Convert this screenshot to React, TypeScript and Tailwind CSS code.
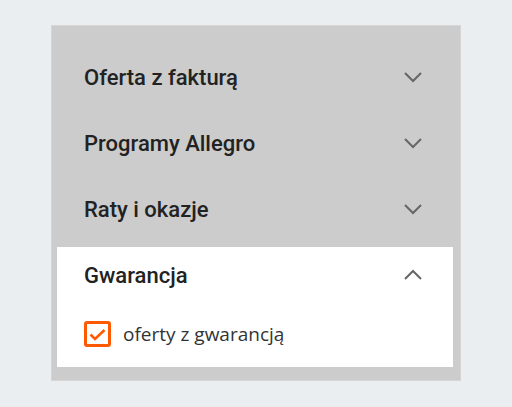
import React, { useState } from 'react';

function Chevron({ up }: { up?: boolean }) {
    return (
        <svg width="20" height="12" viewBox="0 0 20 12" className="shrink-0">
            <path
                d={up ? 'M2 10 L10 2 L18 10' : 'M2 2 L10 10 L18 2'}
                fill="none"
                stroke="#666666"
                strokeWidth="2"
            />
        </svg>
    );
}

function Row({ title }: { title: string }) {
    return (
        <div className="h-[66px] flex items-center justify-between pl-[27px] pr-[30px]">
            <span className="text-[22px] font-medium text-[#222222]">{title}</span>
            <Chevron />
        </div>
    );
}

export default function App() {
    const [checked, setChecked] = useState(true);
    return (
        <div
            className="w-[512px] h-[407px] bg-[#ebeef1] pt-[25px] pl-[51px]"
            style={{ fontFamily: 'Roboto, "Liberation Sans", sans-serif' }}
        >
            <div className="w-[410px] h-[356px] bg-[#cccccc] border border-[#d6d6d6] pl-[5px] pr-[7px] pt-[18px]">
                <Row title="Oferta z fakturą" />
                <Row title="Programy Allegro" />
                <Row title="Raty i okazje" />
                <div className="mt-[5px] bg-white">
                    <div className="h-[56px] flex items-center justify-between pl-[27px] pr-[30px]">
                        <span className="text-[22px] font-medium text-[#222222]">Gwarancja</span>
                        <Chevron up />
                    </div>
                    <div className="pl-[27px] pt-[17px] pb-[18px]">
                        <label className="flex items-center gap-[12px] cursor-pointer">
                            <span
                                className="w-[27px] h-[26px] rounded-[3px] border-[3px] border-[#ff5a00] flex items-center justify-center"
                                onClick={() => setChecked(v => !v)}
                            >
                                {checked && (
                                    <svg width="17" height="13" viewBox="0 0 17 13" className="mt-[1px]">
                                        <path d="M1.5 6.5 L6 11 L15.5 2" fill="none" stroke="#ff5a00" strokeWidth="2.5" />
                                    </svg>
                                )}
                            </span>
                            <span
                                className="text-[19px] text-[#333333]"
                                style={{ fontFamily: '"Open Sans", sans-serif' }}
                            >
                                oferty z gwarancją
                            </span>
                        </label>
                    </div>
                </div>
            </div>
        </div>
    );
}
